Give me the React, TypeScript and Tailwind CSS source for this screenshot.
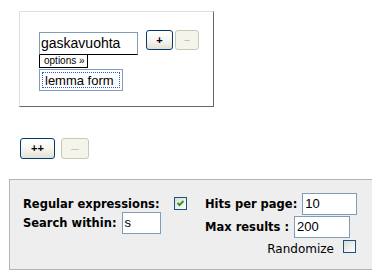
import React from "react";

const lib = "font-['Liberation_Sans',Arial,sans-serif]";
const dej = "font-['DejaVu_Sans',Verdana,sans-serif]";

function Check({ checked }: { checked?: boolean }) {
  return (
    <div className="w-[13px] h-[13px] border border-[#1c5180] bg-linear-to-br from-[#dcdcd7] to-white shrink-0">
      {checked && (
        <svg width="11" height="11" viewBox="0 0 11 11">
          <path d="M2.5 5 L4.5 7 L8.5 3" fill="none" stroke="#21a121" strokeWidth="2" />
        </svg>
      )}
    </div>
  );
}

function XpButton({ label, w, h }: { label: string; w: string; h: string }) {
  return (
    <div
      className={`${w} ${h} ${lib} flex items-center justify-center rounded-[3px] border border-[#003c74] bg-linear-to-b from-white via-[#f7f6f1] to-[#e3e0d3] text-[11px] font-bold text-black leading-none`}
    >
      {label}
    </div>
  );
}

function XpDisabled({ label, w, h, size }: { label: string; w: string; h: string; size: string }) {
  return (
    <div
      className={`${w} ${h} ${lib} ${size} flex items-center justify-center rounded-[3px] border border-[#c9c7ba] bg-[#f5f4ea] text-[#aca899] leading-none`}
    >
      {label}
    </div>
  );
}

export default function App() {
  return (
    <div className="w-[387px] h-[279px] bg-white overflow-hidden">
      <div className="pt-[11px]">
        <div className="ml-[19px] w-[195px] h-[96px] border border-t-[#dedede] border-l-[#dedede] border-r-[#666666] border-b-[#666666] pt-[18px] pl-[19px] flex items-start">
          <div className="mt-[2px] flex flex-col">
            <div className={`w-[99px] h-[23px] border border-[#7f9db9] border-b-black bg-white ${lib} text-[14px] leading-[21px] pl-[1px] text-black`}>
              gaskavuohta
            </div>
            <div className={`w-[49px] h-[13px] border border-t-0 border-black bg-white ${lib} text-[10px] leading-[12px] pl-[4px] text-black whitespace-nowrap`}>
              options »
            </div>
            <div className="mt-[1px] w-[84px] h-[22px] border border-[#7f9db9] bg-white p-[2px]">
              <div className={`w-full h-full border border-dotted border-[#2a5fc6] ${lib} text-[13px] leading-[16px] pl-[2px] text-black`}>
                lemma form
              </div>
            </div>
          </div>
          <div className="ml-[8px] flex gap-[2px]">
            <XpButton label="+" w="w-[27px]" h="h-[20px]" />
            <XpDisabled label="–" w="w-[24px]" h="h-[20px]" size="text-[9px]" />
          </div>
        </div>

        <div className="ml-[20px] mt-[31px] flex gap-[6px]">
          <XpButton label="++" w="w-[35px]" h="h-[21px]" />
          <XpDisabled label="—" w="w-[28px]" h="h-[21px]" size="text-[8px]" />
        </div>

        <div className="ml-[9px] mt-[20px] w-[363px] h-[91px] border-t border-l border-b border-[#b4b4b4] bg-[#eeeeee] flex items-start">
          <div className={`w-[195px] pl-[13px] pt-[17px] ${dej} text-black`}>
            <div className="flex items-start h-[15px]">
              <span className="text-[11.5px] font-bold leading-[15px] whitespace-nowrap">Regular expressions:</span>
              <div className="ml-[14px]">
                <Check checked />
              </div>
            </div>
            <div className="flex items-center h-[22px]">
              <span className="text-[11.5px] font-bold leading-[15px] whitespace-nowrap">Search within:</span>
              <div className={`ml-[5px] w-[39px] h-[22px] border border-[#7f9db9] bg-white ${lib} text-[13px] leading-[20px] pl-[2px]`}>
                s
              </div>
            </div>
          </div>
          <div className={`w-[152px] pt-[13px] ${dej} text-black`}>
            <div className="flex items-center h-[22px]">
              <span className="text-[11.5px] font-bold leading-[15px] whitespace-nowrap">Hits per page:</span>
              <div className={`ml-[5px] w-[56px] h-[22px] border border-[#7f9db9] bg-white ${lib} text-[13px] leading-[20px] pl-[2px]`}>
                10
              </div>
            </div>
            <div className="mt-[1px] flex items-center h-[22px]">
              <span className="text-[11.5px] font-bold leading-[15px] whitespace-nowrap">Max results :</span>
              <div className={`ml-[5px] w-[56px] h-[22px] border border-[#7f9db9] bg-white ${lib} text-[13px] leading-[20px] pl-[2px]`}>
                200
              </div>
            </div>
            <div className="mt-[2px] flex justify-end items-start pr-[1px]">
              <span className="text-[12px] leading-[14px] mt-[2px] whitespace-nowrap">Randomize</span>
              <div className="ml-[9px]">
                <Check />
              </div>
            </div>
          </div>
        </div>
      </div>
    </div>
  );
}
